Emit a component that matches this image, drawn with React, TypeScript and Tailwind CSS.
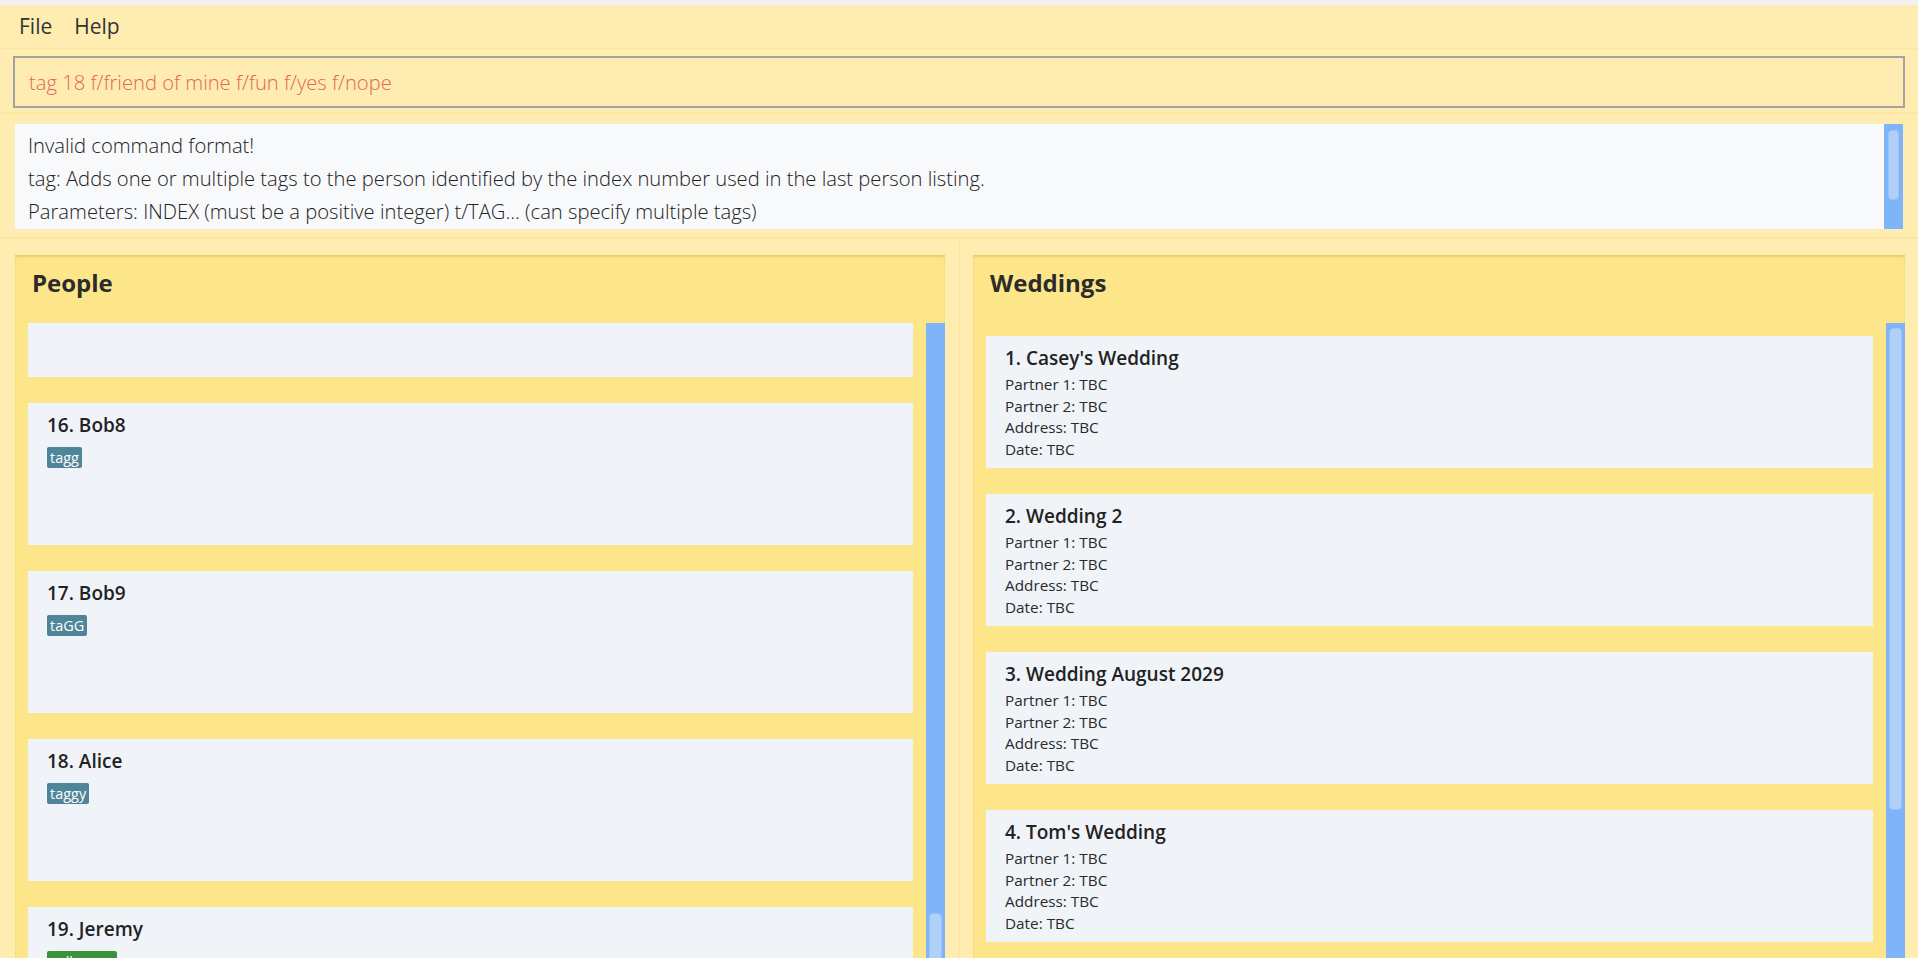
import React from "react";

const people = [
  { n: "16. Bob8", tag: "tagg", color: "bg-[#4f8599]" },
  { n: "17. Bob9", tag: "taGG", color: "bg-[#4f8599]" },
  { n: "18. Alice", tag: "taggy", color: "bg-[#4f8599]" },
  { n: "19. Jeremy", tag: "colleague", color: "bg-[#3a923a]" },
];

const weddings = ["1. Casey's Wedding", "2. Wedding 2", "3. Wedding August 2029", "4. Tom's Wedding", "5. Wedding 5"];

function Scrollbar({ thumb }: { thumb: "top" | "bottom" }) {
  return (
    <div className="w-[19px] shrink-0 bg-[#80b4f8] flex flex-col px-[3px]">
      {thumb === "top" ? (
        <div className="mt-[5px] h-[482px] rounded-[4px] bg-[#b0d0f9] border border-[#9cc2f7]" />
      ) : (
        <div className="mt-auto mb-[-40px] h-[85px] rounded-[4px] bg-[#b0d0f9] border border-[#9cc2f7]" />
      )}
    </div>
  );
}

export default function App() {
  return (
    <div className="w-[1918px] h-[958px] overflow-hidden bg-[#feecb0] flex flex-col font-['Segoe_UI','Open_Sans',sans-serif] text-[#222]">
      <div className="h-[5px] bg-[#f2f2f2] shrink-0" />
      <div className="h-[44px] shrink-0 flex items-center gap-[22px] pl-[19px] text-[21px] text-[#333] border-b border-[#fbe5a4]">
        <span>File</span>
        <span>Help</span>
      </div>
      <div className="h-[65px] shrink-0 px-[13px] pt-[7px] border-b-2 border-[#fde6a0]">
        <div className="h-[52px] border-2 border-[#a3a3a3] flex items-center pl-[14px] text-[20.2px] font-light text-[#e2665c]">
          tag 18 f/friend of mine f/fun f/yes f/nope
        </div>
      </div>
      <div className="h-[125px] shrink-0 pl-[14px] pr-[14px] pt-[9px] border-b-2 border-[#fde6a0]">
        <div className="h-[107px] flex bg-[#f8f9fb] border border-[#fbecc0]">
          <div className="flex-1 pl-[13px] pt-[5px] text-[20.2px] font-light leading-[33px] text-[#222] whitespace-nowrap overflow-hidden">
            <div>Invalid command format!</div>
            <div>tag: Adds one or multiple tags to the person identified by the index number used in the last person listing.</div>
            <div>Parameters: INDEX (must be a positive integer) t/TAG... (can specify multiple tags)</div>
          </div>
          <div className="w-[19px] bg-[#80b4f8] px-[4px] pt-[6px]">
            <div className="h-[70px] rounded-[4px] bg-[#b0d0f9] border border-[#9cc2f7]" />
          </div>
        </div>
      </div>
      <div className="flex-1 flex min-h-0">
        <div className="w-[960px] shrink-0 pl-[15px] pr-[14px] pt-[16px] border-r border-[#fbe3a0] flex">
          <div className="flex-1 flex flex-col bg-[#fde58a] shadow-[inset_0_2px_2px_rgba(200,160,40,0.35)]">
            <div className="h-[68px] shrink-0 pl-[17px] pt-[10px] text-[24px] font-bold text-[#2b2b2b]">People</div>
            <div className="flex-1 flex min-h-0">
              <div className="flex-1 overflow-hidden pl-[13px] pr-[13px]">
                <div className="flex flex-col gap-[26px]">
                  <div className="h-[54px] shrink-0 bg-[#f0f4f9]" />
                  {people.map((p) => (
                    <div key={p.n} className="h-[142px] shrink-0 bg-[#f0f4f9] pl-[19px] pt-[9px]">
                      <div className="text-[19px] font-semibold text-[#222] leading-[26px]">{p.n}</div>
                      <div className="mt-[9px] flex">
                        <span className={`${p.color} text-white text-[14.5px] leading-[21px] px-[3px] rounded-[2px]`}>{p.tag}</span>
                      </div>
                    </div>
                  ))}
                </div>
              </div>
              <Scrollbar thumb="bottom" />
            </div>
          </div>
        </div>
        <div className="flex-1 pl-[13px] pr-[13px] pt-[16px] flex">
          <div className="flex-1 flex flex-col bg-[#fde58a] shadow-[inset_0_2px_2px_rgba(200,160,40,0.35)]">
            <div className="h-[68px] shrink-0 pl-[17px] pt-[10px] text-[24px] font-bold text-[#2b2b2b]">Weddings</div>
            <div className="flex-1 flex min-h-0">
              <div className="flex-1 overflow-hidden pl-[13px] pr-[13px] pt-[13px]">
                <div className="flex flex-col gap-[26px]">
                  {weddings.map((w) => (
                    <div key={w} className="h-[132px] shrink-0 bg-[#f0f4f9] pl-[19px] pt-[9px]">
                      <div className="text-[19px] font-semibold text-[#222] leading-[26px]">{w}</div>
                      <div className="mt-[3px] text-[15.3px] leading-[21.7px] text-[#2a2a2a]">
                        <div>Partner 1: TBC</div>
                        <div>Partner 2: TBC</div>
                        <div>Address: TBC</div>
                        <div>Date: TBC</div>
                      </div>
                    </div>
                  ))}
                </div>
              </div>
              <Scrollbar thumb="top" />
            </div>
          </div>
        </div>
      </div>
    </div>
  );
}
